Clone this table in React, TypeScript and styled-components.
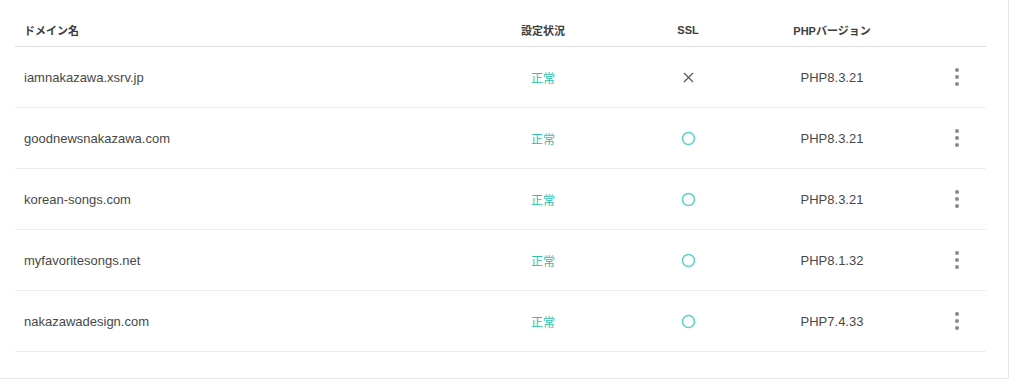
import { createGlobalStyle } from "styled-components";
import styled from "styled-components";

const GlobalStyle = createGlobalStyle`
    body {
        margin: 0;
        background: #ffffff;
        font-family: "Liberation Sans", "Noto Sans CJK JP", sans-serif;
    }
`;

const Card = styled.div`
    width: 1010px;
    margin: -1px 0 0 -1px;
    border: 1px solid #e6e6e6;
    background: #fff;
    padding: 13px 22px 26px 15px;
    box-sizing: border-box;
`;

const Row = styled.div<{ $head?: boolean }>`
    display: grid;
    grid-template-columns: 455px 146px 144px 144px 82px;
    align-items: center;
    height: ${(p) => (p.$head ? "33px" : "60px")};
    border-bottom: 1px solid ${(p) => (p.$head ? "#dedede" : "#ededed")};
`;

const HeadCell = styled.div<{ $left?: boolean }>`
    font-size: 11px;
    font-weight: 700;
    color: #3d3d3d;
    text-align: ${(p) => (p.$left ? "left" : "center")};
    padding-left: ${(p) => (p.$left ? "9px" : "0")};
`;

const Domain = styled.div`
    font-size: 13px;
    color: #484848;
    padding-left: 9px;
`;

const Status = styled.div`
    font-size: 12px;
    color: #2dbfb0;
    text-align: center;
`;

const Center = styled.div`
    display: flex;
    justify-content: center;
    align-items: center;
`;

const Version = styled.div`
    font-size: 13px;
    color: #484848;
    text-align: center;
`;

const MenuCell = styled.div`
    display: flex;
    justify-content: flex-end;
    padding-right: 17px;
`;

const Kebab = styled.button`
    width: 24px;
    height: 28px;
    border: 0;
    background: none;
    padding: 0;
    display: flex;
    flex-direction: column;
    align-items: center;
    justify-content: center;
    gap: 3px;
    cursor: pointer;
`;

const Dot = styled.span`
    width: 4px;
    height: 4px;
    border-radius: 50%;
    background: #8a8a8a;
`;

type Domain = { name: string; ssl: boolean; php: string };

const domains: Domain[] = [
    { name: "iamnakazawa.xsrv.jp", ssl: false, php: "PHP8.3.21" },
    { name: "goodnewsnakazawa.com", ssl: true, php: "PHP8.3.21" },
    { name: "korean-songs.com", ssl: true, php: "PHP8.3.21" },
    { name: "myfavoritesongs.net", ssl: true, php: "PHP8.1.32" },
    { name: "nakazawadesign.com", ssl: true, php: "PHP7.4.33" },
];

const SslOn = () => (
    <svg width="15" height="15" viewBox="0 0 15 15">
        <circle cx="7.5" cy="7.5" r="6" fill="none" stroke="#5dd2c6" strokeWidth="1.6" />
    </svg>
);

const SslOff = () => (
    <svg width="11" height="11" viewBox="0 0 11 11">
        <path d="M1 1 L10 10 M10 1 L1 10" stroke="#555" strokeWidth="1.2" fill="none" />
    </svg>
);

export default function App() {
    return (
        <>
            <GlobalStyle />
            <Card>
                <Row $head>
                    <HeadCell $left>ドメイン名</HeadCell>
                    <HeadCell>設定状況</HeadCell>
                    <HeadCell>SSL</HeadCell>
                    <HeadCell>PHPバージョン</HeadCell>
                    <HeadCell />
                </Row>
                {domains.map((d) => (
                    <Row key={d.name}>
                        <Domain>{d.name}</Domain>
                        <Status>正常</Status>
                        <Center>{d.ssl ? <SslOn /> : <SslOff />}</Center>
                        <Version>{d.php}</Version>
                        <MenuCell>
                            <Kebab aria-label="menu">
                                <Dot />
                                <Dot />
                                <Dot />
                            </Kebab>
                        </MenuCell>
                    </Row>
                ))}
            </Card>
        </>
    );
}
